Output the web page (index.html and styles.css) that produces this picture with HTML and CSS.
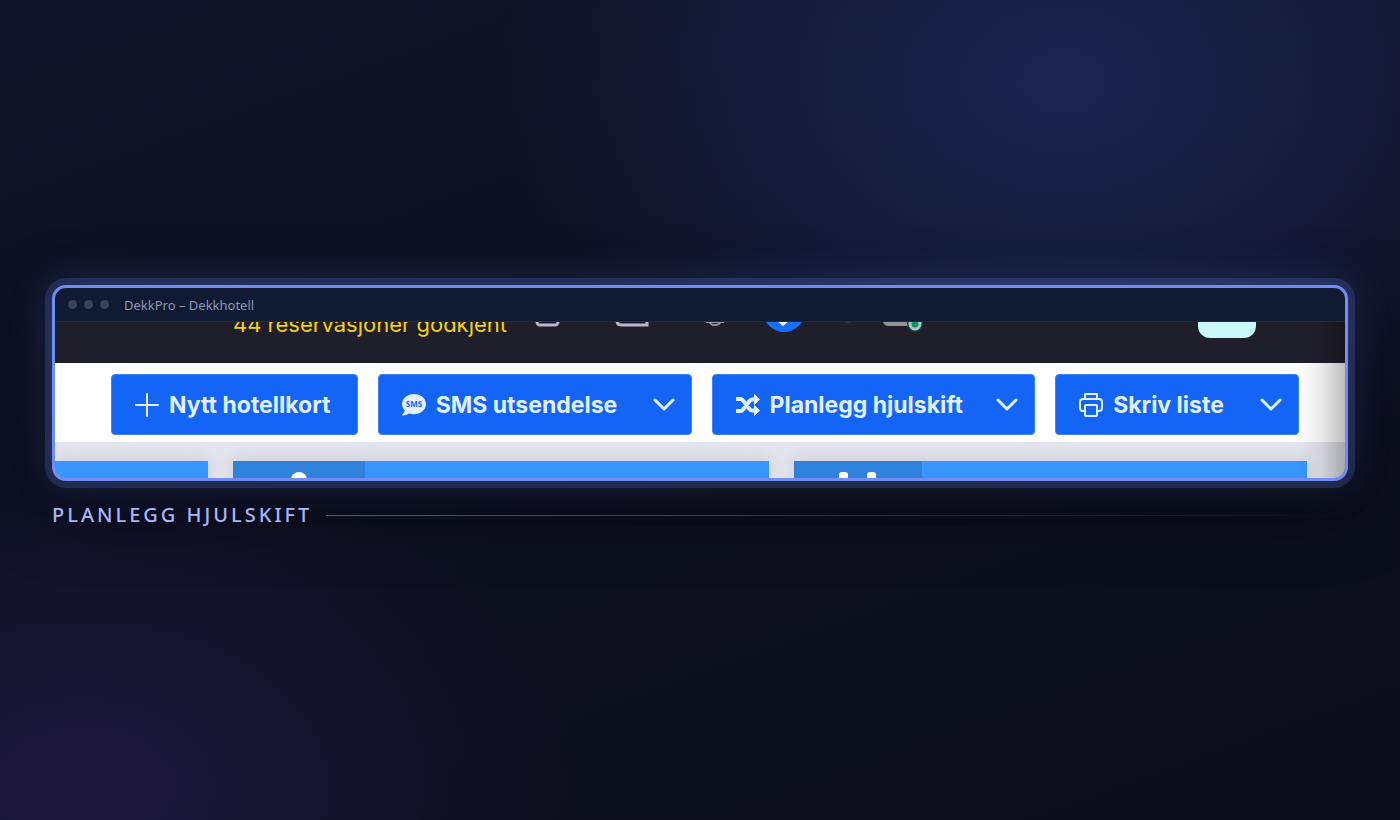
FILE: index.html
```
<!DOCTYPE html>
<html lang="no">
<head>
<meta charset="UTF-8" />
<meta name="viewport" content="width=device-width, initial-scale=1" />
<title>DekkPro – Dekkhotell</title>
<link rel="stylesheet" href="styles.css">
</head>
<body>
<main class="stage">
  <section class="window">
    <header class="titlebar">
      <span class="dot"></span><span class="dot"></span><span class="dot"></span>
      <span class="title">DekkPro – Dekkhotell</span>
    </header>
    <div class="screen">
      <div class="topbar">
        <div class="topbar-row">
          <span class="status">44 reservasjoner godkjent</span>
          <svg class="nav-icon" width="144" height="64" viewBox="0 0 144 64" aria-hidden="true">
            <g fill="none" stroke="#b9b5c8" stroke-width="3">
              <rect x="2" y="18" width="21" height="27" rx="3"/>
              <path d="M82 20v21q0 4 5 4h25V20"/>
            </g>
          </svg>
          <svg class="nav-icon bell" width="20" height="64" viewBox="0 0 20 64" fill="none" stroke="#9996a6" stroke-width="2" aria-hidden="true">
            <path d="M1 42h18M4 42v-10a6 7 0 0 1 12 0v10M5 42a5 3 0 0 0 10 0"/>
          </svg>
          <svg class="nav-icon disc" width="42" height="64" viewBox="0 0 42 64" aria-hidden="true">
            <circle cx="21" cy="31" r="21" fill="#186ef5"/>
            <path d="M21 34l6 6-7 6-7-6z" fill="#fff"/>
          </svg>
          <svg class="nav-icon toggle" width="84" height="64" viewBox="0 0 84 64" aria-hidden="true">
            <ellipse cx="6" cy="41" rx="3" ry="2" fill="#3c3b49"/>
            <rect x="41" y="20" width="34" height="26" rx="5" fill="#8b9698"/>
            <circle cx="73" cy="44" r="8" fill="#17443e"/>
            <circle cx="73" cy="44" r="5" fill="#12916c" stroke="#b0c3bf" stroke-width="3"/>
          </svg>
          <span class="avatar"></span>
        </div>
      </div>
      <nav class="toolbar">
        <button class="btn" type="button">
          <svg class="icon" viewBox="0 0 24 24" fill="none" stroke="currentColor" stroke-width="2" stroke-linecap="round" aria-hidden="true"><path d="M12 1v22M1 12h22"/></svg>
          Nytt hotellkort
        </button>
        <button class="btn" type="button">
          <svg class="icon" viewBox="0 0 24 24" aria-hidden="true">
            <path fill="currentColor" d="M12 1C5.400 1 0 5.500 0 11c0 2.500 1 4.600 2.700 6.300C2.500 19 1.500 20.400.3 21.600c-.3.400-.1.900.4.900 2.600 0 4.800-1 6.100-2 1.600.5 3.300.8 5.200.8 6.600 0 12-4.500 12-10.300S18.600 1 12 1z"/>
            <text class="bubble-text" x="12" y="14" text-anchor="middle">SMS</text>
          </svg>
          SMS utsendelse
          <svg class="chevron" viewBox="0 0 22 14" aria-hidden="true"><path d="M2 2l9 9 9-9"/></svg>
        </button>
        <button class="btn" type="button">
          <svg class="icon" viewBox="0 0 24 24" fill="none" stroke="currentColor" stroke-width="4" aria-hidden="true">
            <path d="M0 6h4.500q1.500 0 2.500 1.400l6.500 8.600q1.200 1.500 2.800 1.500H19M0 18h4.500q1.500 0 2.500-1.400L13.500 8q1.200-1.500 2.800-1.500H19"/>
            <path fill="currentColor" stroke-linejoin="round" stroke-width="1" d="M18.500 1.500l5 5-5 5zM18.500 12.500l5 5-5 5z"/>
          </svg>
          Planlegg hjulskift
          <svg class="chevron" viewBox="0 0 22 14" aria-hidden="true"><path d="M2 2l9 9 9-9"/></svg>
        </button>
        <button class="btn" type="button">
          <svg class="icon" viewBox="0 0 24 24" fill="none" stroke="currentColor" stroke-width="2" stroke-linejoin="round" aria-hidden="true">
            <path d="M6 6V1h12v5M6 18H4a3 3 0 0 1-3-3V9a3 3 0 0 1 3-3h16a3 3 0 0 1 3 3v6a3 3 0 0 1-3 3h-2"/>
            <rect x="6" y="12" width="12" height="11" rx="1"/>
          </svg>
          Skriv liste
          <svg class="chevron" viewBox="0 0 22 14" aria-hidden="true"><path d="M2 2l9 9 9-9"/></svg>
        </button>
      </nav>
      <div class="cards">
        <div class="card"></div>
        <div class="card">
          <div class="card-icon"><svg width="132" height="17" viewBox="0 0 132 17" aria-hidden="true"><circle cx="66" cy="19" r="8" fill="#fff"/></svg></div>
        </div>
        <div class="card">
          <div class="card-icon narrow"><svg width="128" height="17" viewBox="0 0 128 17" fill="#fff" aria-hidden="true"><rect x="45" y="11" width="9" height="12" rx="3"/><rect x="73" y="11" width="9" height="12" rx="3"/></svg></div>
        </div>
      </div>
    </div>
  </section>
  <div class="caption">
    <h1>Planlegg hjulskift</h1>
    <span class="rule"></span>
  </div>
</main>
</body>
</html>
```
FILE: styles.css
```
* {
  box-sizing: border-box;
}
body {
  margin: 0;
  min-height: 100vh;
  display: flex;
  align-items: center;
  background:
    radial-gradient(ellipse 560px 410px at 76% 10%, #1c2551, transparent),
    radial-gradient(ellipse 490px 330px at 6% 96%, #1d173c, transparent),
    linear-gradient(160deg, #0e1528, #0c0f1e 60%, #0b0d1a);
  font-family: "Noto Sans", "Open Sans", sans-serif;
}
.stage {
  width: 100%;
  padding: 0 52px 6px;
}
.window {
  border: 3px solid #718df4;
  border-radius: 14px;
  overflow: hidden;
  background: #101a33;
  box-shadow:
    0 0 0 7px rgba(110, 140, 255, 0.18),
    0 0 44px rgba(110, 140, 255, 0.24),
    0 24px 70px rgba(0, 0, 0, 0.5);
}
.titlebar {
  display: flex;
  align-items: center;
  gap: 7px;
  height: 34px;
  padding: 0 13px;
  border-bottom: 1px solid #222c43;
}
.dot {
  width: 9px;
  height: 9px;
  border-radius: 50%;
  background: #3a435c;
}
.title {
  margin-left: 8px;
  font-size: 13px;
  color: #8d98b9;
}

/* clipped app view */
.screen {
  position: relative;
  overflow: hidden;
}
.screen::after {
  content: "";
  position: absolute;
  top: 0;
  right: 0;
  bottom: 0;
  width: 48px;
  background: linear-gradient(to right, transparent, rgba(0, 0, 0, 0.08) 50%, rgba(0, 0, 0, 0.26));
  pointer-events: none;
}
.topbar {
  height: 41px;
  overflow: hidden;
  background: #1f1e2b;
}
.topbar-row {
  display: flex;
  align-items: center;
  height: 64px;
  margin-top: -42px;
  padding: 0 89px 0 178px;
}
.status {
  width: 302px;
  padding-top: 24px;
  font-family: Inter, "Open Sans", sans-serif;
  font-size: 22px;
  line-height: 24px;
  white-space: nowrap;
  color: #f3d20b;
}
.nav-icon {
  flex: none;
}
.bell {
  margin-left: 26px;
}
.disc {
  margin-left: 38px;
}
.toggle {
  margin-left: 37px;
}
.avatar {
  width: 58px;
  height: 52px;
  margin-left: auto;
  border-radius: 12px;
  background: #c9f8f8;
}
.toolbar {
  display: grid;
  grid-template-columns: minmax(0, 247fr) minmax(0, 314fr) minmax(0, 324fr) minmax(0, 244fr);
  gap: 20px;
  padding: 11px 46px 7px 56px;
  background: #fff;
}
.btn {
  display: flex;
  align-items: center;
  gap: 10px;
  height: 61px;
  padding: 0 16px 0 23px;
  border: 1px solid #3b82ff;
  border-radius: 4px;
  background: #1464f6;
  color: #e0f0ff;
  font-family: Inter, "Open Sans", sans-serif;
  font-size: 23px;
  font-weight: 700;
  white-space: nowrap;
}
.icon {
  flex: none;
  width: 24px;
  height: 24px;
}
.bubble-text {
  font: 700 8px "Open Sans", sans-serif;
  fill: #1464f6;
}
.chevron {
  flex: none;
  width: 22px;
  height: 14px;
  margin-left: auto;
  fill: none;
  stroke: currentColor;
  stroke-width: 3;
  stroke-linecap: round;
  stroke-linejoin: round;
}
.cards {
  display: grid;
  grid-template-columns: 153fr 536fr 513fr;
  gap: 25px;
  height: 36px;
  padding: 19px 38px 0 0;
  background: #e3e4ed;
}
.card {
  background: #3795fb;
  box-shadow: 0 0 16px rgba(60, 70, 90, 0.18);
}
.card-icon {
  width: 132px;
  height: 17px;
  background: #2f82db;
}
.card-icon.narrow {
  width: 128px;
}

.caption {
  display: flex;
  align-items: center;
  gap: 14px;
  margin-top: 20px;
}
.caption h1 {
  margin: 0;
  font-size: 20px;
  line-height: 28px;
  font-weight: 500;
  letter-spacing: 3px;
  text-transform: uppercase;
  color: #a9b6f8;
}
.rule {
  flex: 1;
  height: 1px;
  background: linear-gradient(to right, #515872, transparent);
}
```
